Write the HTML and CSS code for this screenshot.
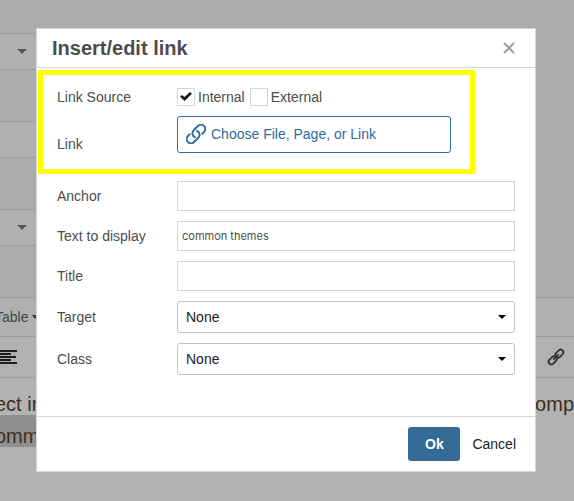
FILE: index.html
```
<!DOCTYPE html>
<html lang="en">
<head>
    <meta charset="UTF-8">
    <meta name="viewport" content="width=device-width, initial-scale=1.0">
    <title>Insert/edit link</title>
    <link rel="stylesheet" href="styles.css">
</head>
<body>
    <!-- Page behind the dialog -->
    <div class="page">
        <div class="fields">
            <div class="field"><svg width="10" height="5" viewBox="0 0 10 5"><path d="M0 0h10L5 5z"/></svg></div>
            <div class="field"></div>
            <div class="field"><svg width="10" height="5" viewBox="0 0 10 5"><path d="M0 0h10L5 5z"/></svg></div>
        </div>
        <div class="menubar">
            <span>Table</span>
            <svg width="6" height="4" viewBox="0 0 6 4"><path d="M0 0h6L3 4z"/></svg>
        </div>
        <div class="toolbar">
            <svg width="17" height="14" viewBox="0 0 17 14"><path d="M0 0h17v2H0zM0 3h11v2H0zM0 6h16v2H0zM0 9h11v2H0zM0 12h17v2H0z"/></svg>
            <svg width="18" height="18" viewBox="0 0 18 18" fill="none" stroke="#333" stroke-width="1.8" stroke-linecap="round">
                <rect x="-4.6" y="-2.7" width="9.2" height="5.4" rx="2.7" transform="translate(12.3 5.7) rotate(-45)"/>
                <rect x="-4.6" y="-2.7" width="9.2" height="5.4" rx="2.7" transform="translate(5.7 12.3) rotate(-45)"/>
                <path d="M6.8 11.2l4.4-4.4"/>
            </svg>
        </div>
        <div class="editor">
            <p><span>ect in</span><span>omp</span></p>
            <p><mark>omm</mark></p>
        </div>
    </div>

    <div class="overlay">
        <form class="modal" role="dialog" aria-labelledby="modalTitle">
            <div class="modal-header">
                <h1 id="modalTitle">Insert/edit link</h1>
                <button type="button" class="close" aria-label="Close">
                    <svg width="12" height="12" viewBox="0 0 12 12"><path d="M1 1l10 10M11 1L1 11" stroke="#a0a0a0" stroke-width="2"/></svg>
                </button>
            </div>

            <div class="highlight">
                <div class="row" role="group" aria-labelledby="sourceLabel">
                    <span class="label" id="sourceLabel">Link Source</span>
                    <div class="checks">
                        <label><input type="checkbox" class="check" checked>Internal</label>
                        <label><input type="checkbox" class="check">External</label>
                    </div>
                </div>
                <div class="row row-link">
                    <label class="label" for="choose">Link</label>
                    <button type="button" class="choose" id="choose">
                        <svg width="20" height="20" viewBox="1.500 1.500 21 21" fill="none" stroke="#2f6b9c" stroke-width="2" stroke-linecap="round" stroke-linejoin="round">
                            <path d="M13.190 8.688a4.500 4.500 0 0 1 1.242 7.244l-4.500 4.500a4.500 4.500 0 0 1-6.364-6.364l1.757-1.757"/>
                            <path d="M18.675 11.690l1.757-1.757a4.500 4.500 0 0 0-6.364-6.364l-4.500 4.500a4.500 4.500 0 0 0 1.242 7.244"/>
                        </svg>
                        Choose File, Page, or Link
                    </button>
                </div>
            </div>

            <div class="rows">
                <div class="row">
                    <label class="label" for="anchor">Anchor</label>
                    <input type="text" class="text" id="anchor">
                </div>
                <div class="row">
                    <label class="label" for="display">Text to display</label>
                    <input type="text" class="text" id="display" value="common themes">
                </div>
                <div class="row">
                    <label class="label" for="title">Title</label>
                    <input type="text" class="text" id="title">
                </div>
                <div class="row">
                    <label class="label" for="target">Target</label>
                    <div class="select">
                        <select id="target"><option>None</option></select>
                        <svg width="8" height="4" viewBox="0 0 8 4"><path d="M0 0h8L4 4z"/></svg>
                    </div>
                </div>
                <div class="row">
                    <label class="label" for="class">Class</label>
                    <div class="select">
                        <select id="class"><option>None</option></select>
                        <svg width="8" height="4" viewBox="0 0 8 4"><path d="M0 0h8L4 4z"/></svg>
                    </div>
                </div>
            </div>

            <div class="modal-footer">
                <button type="submit" class="ok">Ok</button>
                <button type="button" class="cancel">Cancel</button>
            </div>
        </form>
    </div>
</body>
</html>
```
FILE: styles.css
```
* {
    box-sizing: border-box;
}
body {
    margin: 0;
    overflow: hidden;
    background: #aaacae;
    color: #4d4d4d;
    font-family: "Liberation Sans", Arial, sans-serif;
    font-size: 14px;
    line-height: 18px;
}
svg {
    flex: none;
}
button, input, select {
    font-family: inherit;
    font-size: 14px;
    line-height: 18px;
}
button {
    padding: 0;
    border: none;
    background: none;
    cursor: pointer;
}

/* Page behind the dialog */
.page {
    display: flex;
    flex-direction: column;
    min-height: 100vh;
}
.fields {
    display: flex;
    flex-direction: column;
    gap: 51px;
    padding: 33px 0 51px;
    width: 50%;
}
.field {
    display: flex;
    align-items: center;
    height: 37px;
    padding-left: 17px;
    background: #b0b0b0;
    border: solid #999da1;
    border-width: 1px 0;
    fill: #555;
}
.menubar {
    display: flex;
    align-items: center;
    gap: 4px;
    height: 39px;
    margin-left: -5px;
    background: #b0b0b0;
    border-top: 1px solid #999da1;
    color: #444;
    fill: #333;
}
.toolbar {
    display: flex;
    align-items: center;
    justify-content: space-between;
    height: 42px;
    padding-right: 9px;
    background: #b1b1b1;
    border: solid #999da1;
    border-width: 1px 0;
    fill: #1c1c1c;
}
.editor {
    flex: 1;
    padding-top: 15px;
    background: #b2b2b2;
    color: #3d2f20;
    font-size: 20px;
    line-height: 22px;
}
.editor p {
    display: flex;
    justify-content: space-between;
    margin: 0 0 0 -5px;
}
.editor mark {
    padding: 10px 20px 0 0;
    background: #8f8f8f;
    color: inherit;
}

/* Dialog */
.overlay {
    position: fixed;
    inset: 0;
    display: flex;
    align-items: center;
    justify-content: center;
    padding: 0 2px 2px 0;
}
.modal {
    width: 500px;
    max-width: 100%;
    background: #fff;
    border: 1px solid #d3d8de;
}
.modal-header {
    display: flex;
    align-items: center;
    justify-content: space-between;
    height: 39px;
    padding: 0 20px 0 15px;
    border-bottom: 1px solid #d3d8de;
}
.modal-header h1 {
    margin: 0;
    font-size: 20px;
    line-height: 24px;
}
.close {
    display: flex;
}
.highlight {
    display: grid;
    gap: 10px;
    margin: 2px 60px 0 1px;
    padding: 13px 19px 16px 14px;
    border: 5px solid #ff0;
}
.rows {
    display: grid;
    gap: 10px;
    padding: 7px 20px 41px;
}
.row {
    display: flex;
    align-items: center;
}
.row-link {
    align-items: flex-end;
}
.label {
    flex: none;
    width: 120px;
}
.checks {
    display: flex;
    gap: 5px;
}
.checks label {
    display: flex;
    gap: 3px;
}
.check {
    appearance: none;
    display: grid;
    place-items: center;
    width: 18px;
    height: 18px;
    margin: 0;
    border: 1px solid #d0d7de;
}
.check:checked::before {
    content: "";
    width: 12px;
    height: 10px;
    background: #1c1c1c;
    clip-path: polygon(0 52%, 17% 34%, 37% 56%, 83% 4%, 100% 22%, 38% 94%);
}
.choose {
    display: flex;
    align-items: center;
    gap: 5px;
    flex: 1;
    height: 37px;
    padding: 0 8px;
    border: 1px solid #2f6b9c;
    border-radius: 3px;
    color: #2f6b9c;
}
.text {
    flex: 1;
    min-width: 0;
    height: 30px;
    padding: 0 4px;
    border: 1px solid #d0d7de;
    color: #4d4d4d;
    font-family: Inter, sans-serif;
    font-size: 11px;
}
.select {
    display: grid;
    flex: 1;
    align-items: center;
}
.select select, .select svg {
    grid-area: 1 / 1;
}
.select select {
    appearance: none;
    height: 32px;
    padding: 0 8px;
    border: 1px solid #c4c4c4;
    border-radius: 3px;
    background: #fff;
    color: #222;
}
.select svg {
    justify-self: end;
    margin-right: 9px;
    pointer-events: none;
}
.modal-footer {
    display: flex;
    align-items: center;
    justify-content: flex-end;
    gap: 12px;
    padding: 10px 19px;
    border-top: 1px solid #d3d8de;
}
.ok {
    width: 52px;
    height: 34px;
    border-radius: 3px;
    background: #336a96;
    color: #fff;
    font-weight: bold;
}
.cancel {
    color: #222;
}
```
